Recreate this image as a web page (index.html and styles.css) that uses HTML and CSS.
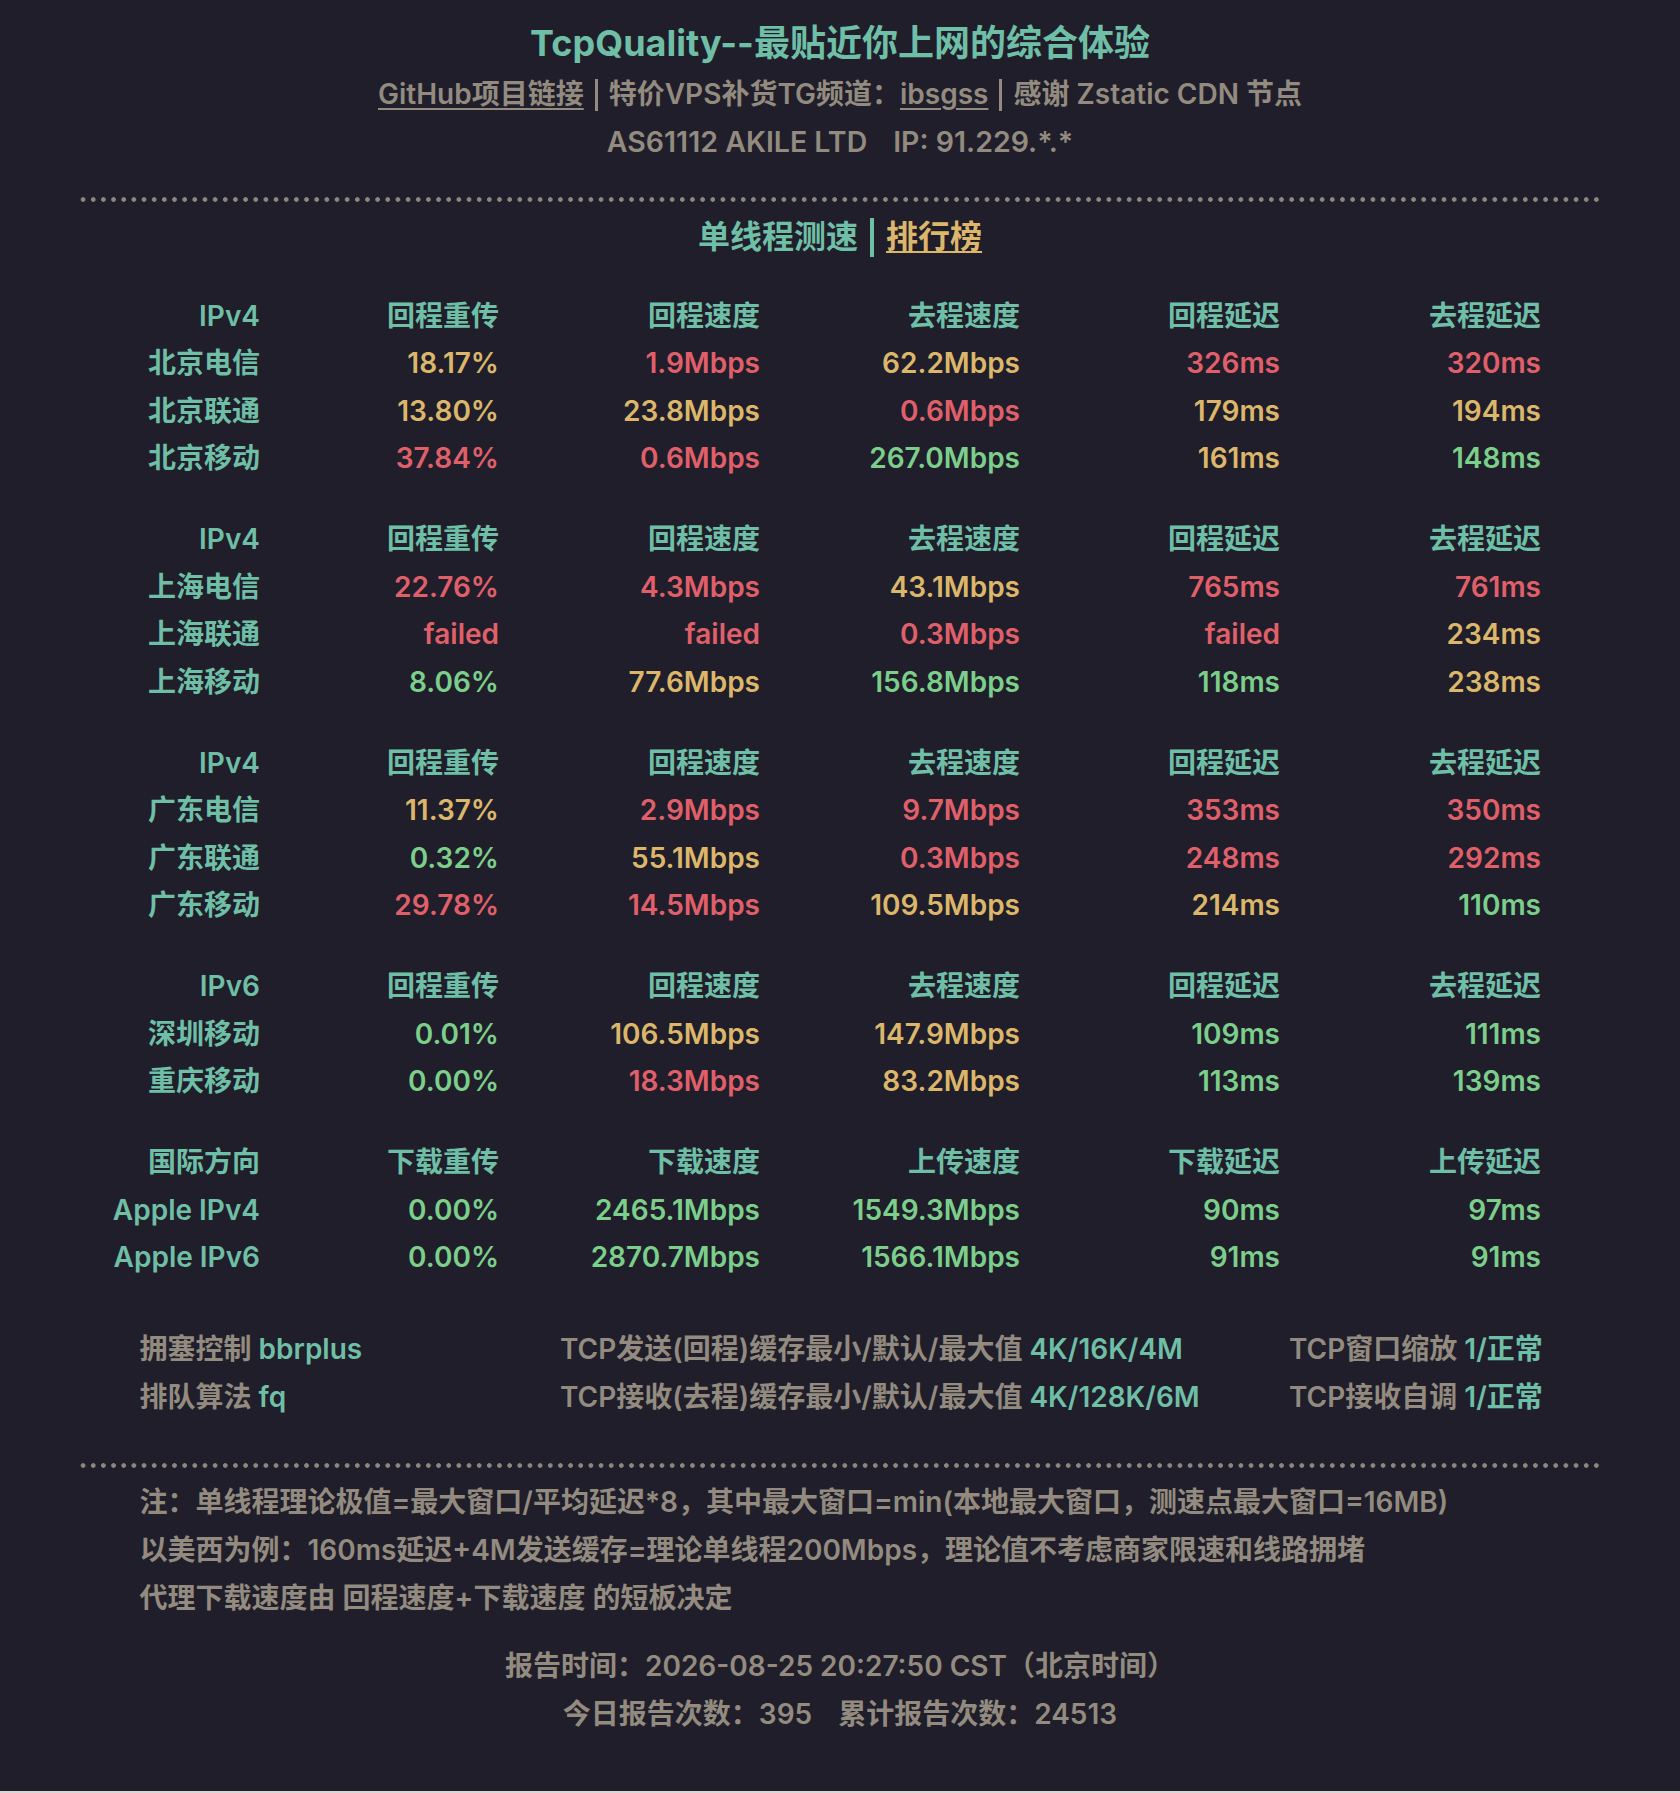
FILE: index.html
```html
<!DOCTYPE html>
<html lang="zh-CN">
<head>
<meta charset="utf-8">
<title>TcpQuality</title>
<link rel="stylesheet" href="styles.css">
</head>
<body>
<main class="page">
  <header class="head">
    <h1 class="title">TcpQuality--最贴近你上网的综合体验</h1>
    <p class="links"><a class="ulink" href="#">GitHub项目链接</a><span class="sep"></span>特价VPS补货TG频道：<a class="ulink" href="#">ibsgss</a><span class="sep"></span>感谢 Zstatic CDN 节点</p>
    <p class="ip">AS61112 AKILE LTD<span class="gap">IP: 91.229.*.*</span></p>
  </header>

  <div class="dots"></div>

  <nav class="tabs"><span class="tab">单线程测速</span><span class="tab-bar"></span><a class="tab-link" href="#">排行榜</a></nav>

  <section class="results">
    <div class="group">
      <span class="hd">IPv4</span><span class="hd">回程重传</span><span class="hd">回程速度</span><span class="hd">去程速度</span><span class="hd">回程延迟</span><span class="hd">去程延迟</span>
      <span class="hd">北京电信</span><span class="y">18.17%</span><span class="r">1.9Mbps</span><span class="y">62.2Mbps</span><span class="r">326ms</span><span class="r">320ms</span>
      <span class="hd">北京联通</span><span class="y">13.80%</span><span class="y">23.8Mbps</span><span class="r">0.6Mbps</span><span class="y">179ms</span><span class="y">194ms</span>
      <span class="hd">北京移动</span><span class="r">37.84%</span><span class="r">0.6Mbps</span><span class="g">267.0Mbps</span><span class="y">161ms</span><span class="g">148ms</span>
    </div>
    <div class="group">
      <span class="hd">IPv4</span><span class="hd">回程重传</span><span class="hd">回程速度</span><span class="hd">去程速度</span><span class="hd">回程延迟</span><span class="hd">去程延迟</span>
      <span class="hd">上海电信</span><span class="r">22.76%</span><span class="r">4.3Mbps</span><span class="y">43.1Mbps</span><span class="r">765ms</span><span class="r">761ms</span>
      <span class="hd">上海联通</span><span class="r">failed</span><span class="r">failed</span><span class="r">0.3Mbps</span><span class="r">failed</span><span class="y">234ms</span>
      <span class="hd">上海移动</span><span class="g">8.06%</span><span class="y">77.6Mbps</span><span class="g">156.8Mbps</span><span class="g">118ms</span><span class="y">238ms</span>
    </div>
    <div class="group">
      <span class="hd">IPv4</span><span class="hd">回程重传</span><span class="hd">回程速度</span><span class="hd">去程速度</span><span class="hd">回程延迟</span><span class="hd">去程延迟</span>
      <span class="hd">广东电信</span><span class="y">11.37%</span><span class="r">2.9Mbps</span><span class="r">9.7Mbps</span><span class="r">353ms</span><span class="r">350ms</span>
      <span class="hd">广东联通</span><span class="g">0.32%</span><span class="y">55.1Mbps</span><span class="r">0.3Mbps</span><span class="r">248ms</span><span class="r">292ms</span>
      <span class="hd">广东移动</span><span class="r">29.78%</span><span class="r">14.5Mbps</span><span class="y">109.5Mbps</span><span class="y">214ms</span><span class="g">110ms</span>
    </div>
    <div class="group">
      <span class="hd">IPv6</span><span class="hd">回程重传</span><span class="hd">回程速度</span><span class="hd">去程速度</span><span class="hd">回程延迟</span><span class="hd">去程延迟</span>
      <span class="hd">深圳移动</span><span class="g">0.01%</span><span class="y">106.5Mbps</span><span class="y">147.9Mbps</span><span class="g">109ms</span><span class="g">111ms</span>
      <span class="hd">重庆移动</span><span class="g">0.00%</span><span class="r">18.3Mbps</span><span class="y">83.2Mbps</span><span class="g">113ms</span><span class="g">139ms</span>
    </div>
    <div class="group">
      <span class="hd">国际方向</span><span class="hd">下载重传</span><span class="hd">下载速度</span><span class="hd">上传速度</span><span class="hd">下载延迟</span><span class="hd">上传延迟</span>
      <span class="hd">Apple IPv4</span><span class="g">0.00%</span><span class="g">2465.1Mbps</span><span class="g">1549.3Mbps</span><span class="g">90ms</span><span class="g">97ms</span>
      <span class="hd">Apple IPv6</span><span class="g">0.00%</span><span class="g">2870.7Mbps</span><span class="g">1566.1Mbps</span><span class="g">91ms</span><span class="g">91ms</span>
    </div>
  </section>

  <section class="sysinfo">
    <span>拥塞控制 <b class="val">bbrplus</b></span>
    <span>TCP发送(回程)缓存最小/默认/最大值 <b class="val">4K/16K/4M</b></span>
    <span>TCP窗口缩放 <b class="val">1/正常</b></span>
    <span>排队算法 <b class="val">fq</b></span>
    <span>TCP接收(去程)缓存最小/默认/最大值 <b class="val">4K/128K/6M</b></span>
    <span>TCP接收自调 <b class="val">1/正常</b></span>
  </section>

  <div class="dots dots-low"></div>

  <section class="notes">
    <p>注：单线程理论极值=最大窗口/平均延迟*8，其中最大窗口=min(本地最大窗口，测速点最大窗口=16MB)</p>
    <p>以美西为例：160ms延迟+4M发送缓存=理论单线程200Mbps，理论值不考虑商家限速和线路拥堵</p>
    <p>代理下载速度由 回程速度+下载速度 的短板决定</p>
  </section>

  <footer class="report">
    <p>报告时间：2026-08-25 20:27:50 CST（北京时间）</p>
    <p>今日报告次数：395<span class="gap">累计报告次数：24513</span></p>
  </footer>
</main>
</body>
</html>
```

FILE: styles.css
```css
html, body {
  margin: 0;
  padding: 0;
  background: #d6d6d6;
}

.page {
  box-sizing: border-box;
  min-height: 1791px;
  padding: 16px 0 0;
  background: #1f1e2a;
  color: #938b7f;
  font-family: "Inter", "Noto Sans CJK SC", sans-serif;
  font-weight: 600;
  font-size: 28px;
}

.title {
  margin: 0;
  font-size: 36px;
  line-height: 54px;
  font-weight: 700;
  text-align: center;
  color: #6fbea6;
}

.links,
.ip {
  margin: 0;
  line-height: 48px;
  text-align: center;
}

.ip {
  font-size: 28.5px;
}

.ulink {
  color: inherit;
  text-decoration: underline;
  text-decoration-thickness: 2px;
  text-underline-offset: 4px;
}

.sep {
  display: inline-block;
  width: 3px;
  height: 32px;
  margin: 0 11px;
  background: #938b7f;
  vertical-align: -7px;
}

.gap {
  margin-left: 26px;
}

.dots {
  margin: 30.5px 78px 0;
  height: 5px;
  background-image: radial-gradient(circle at center, #8d877d 0, #8d877d 2px, rgba(141, 135, 125, 0) 2.6px);
  background-size: 10.16px 5px;
  background-repeat: repeat-x;
}

.dots-low {
  margin-top: 42px;
}

.tabs {
  margin-top: 11.5px;
  display: flex;
  justify-content: center;
  align-items: center;
  font-size: 32px;
  line-height: 48px;
}

.tab {
  color: #6fbea6;
}

.tab-bar {
  width: 4px;
  height: 39px;
  margin: 0 12px;
  background: #6fbea6;
}

.tab-link {
  color: #dcb76b;
  text-decoration: underline;
  text-decoration-thickness: 2px;
  text-underline-offset: 3px;
}

.results {
  margin-top: 31.75px;
  padding-left: 80px;
  display: flex;
  flex-direction: column;
  gap: 33.5px;
}

.group {
  display: grid;
  grid-template-columns: 180px 239px 261px 260px 260px 261px;
  line-height: 47.5px;
  text-align: right;
  white-space: nowrap;
}

.hd { color: #6fbea6; }
.y { color: #dcb76b; }
.r { color: #e0606a; }
.g { color: #7ccf8b; }

.sysinfo {
  margin-top: 42.75px;
  padding-left: 139.5px;
  display: grid;
  grid-template-columns: 420.5px 729px auto;
  line-height: 48px;
  white-space: nowrap;
}

.val {
  font-weight: 600;
  color: #6fbea6;
}

.notes {
  margin-top: 10.2px;
  padding-left: 139.5px;
}

.notes p,
.report p {
  margin: 0;
  line-height: 48px;
  white-space: nowrap;
}

.report {
  margin-top: 20.8px;
  text-align: center;
}
```
